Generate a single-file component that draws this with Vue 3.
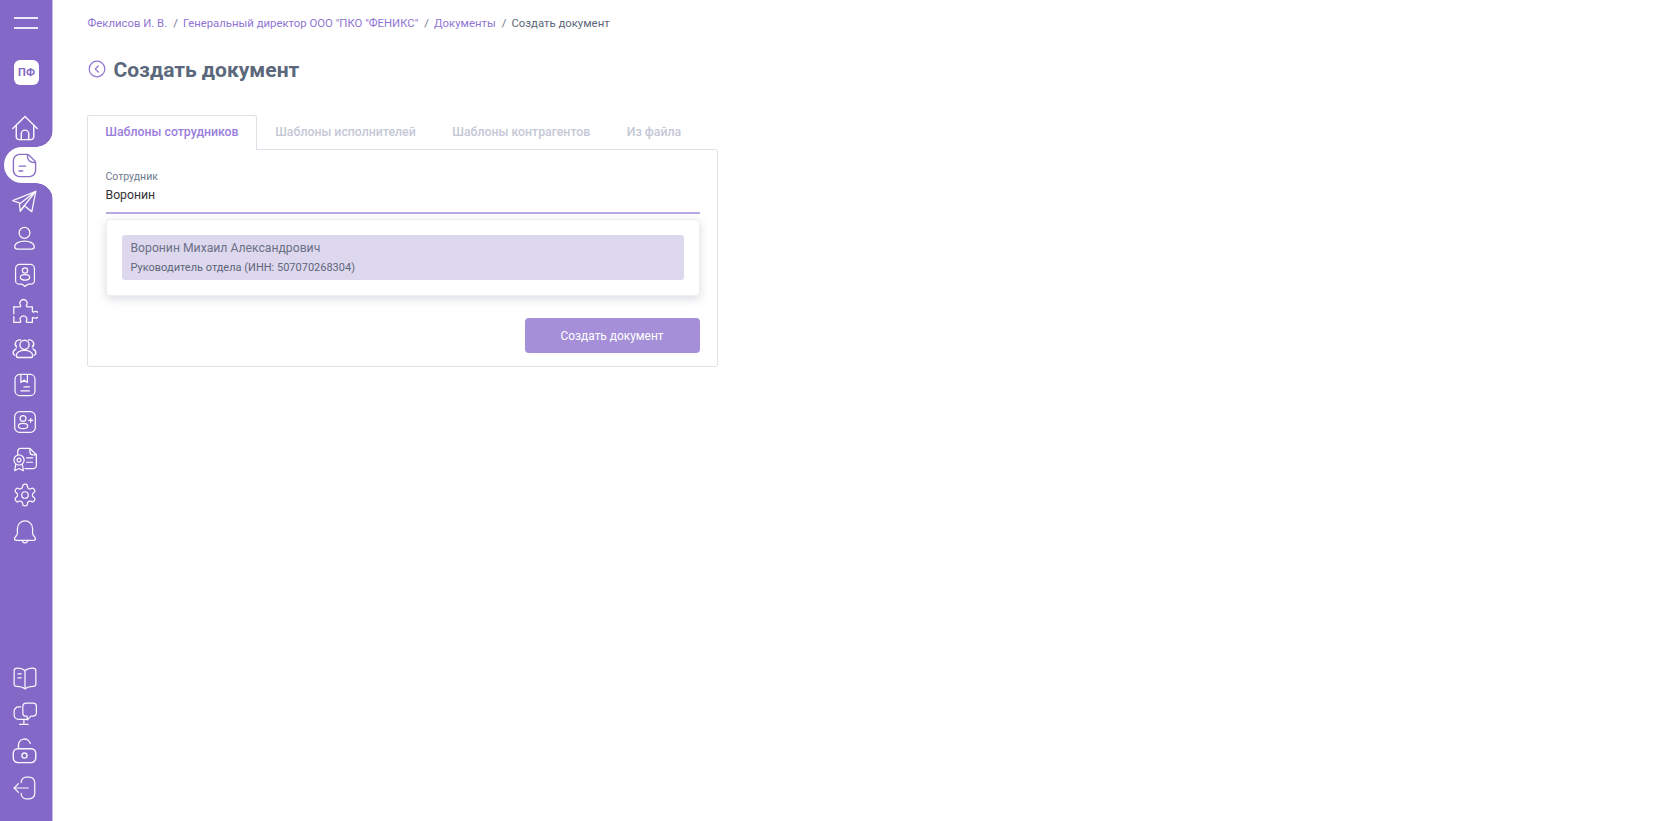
<script setup>
const c = (x, y, r) => `M${x - r} ${y}a${r} ${r} 0 1 0 ${2 * r} 0a${r} ${r} 0 1 0 ${-2 * r} 0z`
const e = (x, y, rx, ry) => `M${x - rx} ${y}a${rx} ${ry} 0 1 0 ${2 * rx} 0a${rx} ${ry} 0 1 0 ${-2 * rx} 0z`

const topIcons = [
  { name: 'home', s: 30, d: ['M2.2 12.4 12 2.8l9.8 9.6', 'M5 10.2V19a2.3 2.3 0 0 0 2.3 2.3h9.4A2.3 2.3 0 0 0 19 19v-8.8', 'M9 21.3v-4.6a3 3 0 0 1 6 0v4.6'] },
  { name: 'doc', s: 29, active: true, d: ['M14 2.8H8A5.2 5.2 0 0 0 2.8 8v8A5.2 5.2 0 0 0 8 21.2h8a5.2 5.2 0 0 0 5.2-5.2V9.8c0-.6-.2-1.1-.6-1.5l-5-5c-.4-.3-.9-.5-1.4-.5z', 'M14.5 3v1.5a5 5 0 0 0 5 5H21', 'M7.5 12.5H13', 'M7.5 16.5h3'] },
  { name: 'plane', s: 27, d: ['M1.5 11.2 22 3l-3.5 18-6.7-5.2-3.6 4.7-.8-7.3z', 'M7.9 14 22 3 11.8 15.8', 'M8.2 20.5l3.6-4.7'] },
  { name: 'user', s: 27, d: [c(12, 7, 4.8), 'M12 14.3c-4.8 0-8.7 2-8.7 4.8 0 1.5 1 2.3 2.5 2.3h12.4c1.5 0 2.5-.8 2.5-2.3 0-2.8-3.9-4.8-8.7-4.8z'] },
  { name: 'badge', d: ['M7 2.3h10a3.7 3.7 0 0 1 3.7 3.7v11.2a3.3 3.3 0 0 1-3.3 3.3h-2.7L12 22.5l-2.7-2H6.6a3.3 3.3 0 0 1-3.3-3.3V6A3.7 3.7 0 0 1 7 2.3z', c(12, 7.8, 2.4), e(12, 14.2, 4.3, 2.6)] },
  { name: 'puzzle', s: 27, d: ['M2.5 7.8h5.2c.8 0 1.1-.8.7-1.4a3.2 3.2 0 1 1 5.4 0c-.4.6-.1 1.4.7 1.4h4.5v3.8c0 .8.8 1.1 1.4.7a3 3 0 1 1 0 5.2c-.6-.4-1.4-.1-1.4.7v3.5h-4.6c-.8 0-1-.8-.7-1.4a3 3 0 1 0-5.2 0c.3.6 0 1.4-.7 1.4H2.5v-5.2', 'M2.5 14V7.8'] },
  { name: 'users', s: 29, d: [c(12, 9, 3.8), 'M12 13.5c-3.8 0-6.8 1.8-6.8 4.2 0 1.1.7 1.8 1.8 1.8h10c1.1 0 1.8-.7 1.8-1.8 0-2.4-3-4.2-6.8-4.2z', 'M8.7 5a3.4 3.4 0 0 0-3.2 5.8', 'M15.3 5a3.4 3.4 0 0 1 3.2 5.8', 'M5 12.3c-1.3.7-2.4 2-2.4 3.4 0 .9.5 1.5 1.2 1.7', 'M19 12.3c1.3.7 2.4 2 2.4 3.4 0 .9-.5 1.5-1.2 1.7'] },
  { name: 'ledger', d: ['M7 2.3h10a4.2 4.2 0 0 1 4.2 4.2v11a4.2 4.2 0 0 1-4.2 4.2H7a4.2 4.2 0 0 1-4.2-4.2v-11A4.2 4.2 0 0 1 7 2.3z', 'M8.2 2.5v7.2l3-2.2 3 2.2V2.5', 'M11 13.8h5', 'M8.2 17.5H16'] },
  { name: 'gplus', d: ['M7 2.5h10A4.5 4.5 0 0 1 21.5 7v10a4.5 4.5 0 0 1-4.5 4.5H7A4.5 4.5 0 0 1 2.5 17V7A4.5 4.5 0 0 1 7 2.5z', c(10.2, 8.8, 2.7), e(10.2, 15.7, 4.3, 2.5), 'M15.5 10.5H19', 'M17.25 8.8v3.5'] },
  { name: 'cert', d: ['M5.3 8.3V5A2.8 2.8 0 0 1 8 2.3h8.5l6 5.8V18a2.8 2.8 0 0 1-2.8 2.8H12', 'M16.5 2.5v2.8a2.8 2.8 0 0 0 2.8 2.8h3', 'M13.5 11H19', 'M13.5 15H19', c(6.5, 13, 4.7), c(6.5, 13, 1.8), 'M3.5 16.8l-1 6 4-2 4 2-1-6'] },
  { name: 'gear', d: [c(12, 12, 3), 'M12.22 2h-.44a2 2 0 0 0-2 2v.18a2 2 0 0 1-1 1.73l-.43.25a2 2 0 0 1-2 0l-.15-.08a2 2 0 0 0-2.73.73l-.22.38a2 2 0 0 0 .73 2.73l.15.1a2 2 0 0 1 1 1.72v.51a2 2 0 0 1-1 1.74l-.15.09a2 2 0 0 0-.73 2.73l.22.38a2 2 0 0 0 2.73.73l.15-.08a2 2 0 0 1 2 0l.43.25a2 2 0 0 1 1 1.73V20a2 2 0 0 0 2 2h.44a2 2 0 0 0 2-2v-.18a2 2 0 0 1 1-1.73l.43-.25a2 2 0 0 1 2 0l.15.08a2 2 0 0 0 2.73-.73l.22-.39a2 2 0 0 0-.73-2.73l-.15-.08a2 2 0 0 1-1-1.74v-.5a2 2 0 0 1 1-1.74l.15-.09a2 2 0 0 0 .73-2.73l-.22-.38a2 2 0 0 0-2.73-.73l-.15.08a2 2 0 0 1-2 0l-.43-.25a2 2 0 0 1-1-1.73V4a2 2 0 0 0-2-2z'] },
  { name: 'bell', d: ['M12 1.8a7 7 0 0 0-7 7v4.5c0 2-2.7 3.2-2.7 5 0 1 .9 1.5 2 1.5h15.4c1.1 0 2-.5 2-1.5 0-1.8-2.7-3-2.700-5V8.800a7 7 0 0 0-7-7z', 'M9.3 20a2.8 2.8 0 0 0 5.4 0'] },
]
const bottomIcons = [
  { name: 'book', d: ['M12 5.2C10.2 3.5 7.5 2.8 4.8 2.8 3.3 2.8 2 3.8 2 5.3v12.5c0 1.2 1 2 2.2 2 2.8 0 5.8.6 7.800 2.200 2-1.600 5-2.200 7.800-2.200 1.200 0 2.200-.8 2.200-2V5.300c0-1.500-1.300-2.500-2.800-2.500-2.700 0-5.400.7-7.200 2.400z', 'M12 5.2V22', 'M5.5 8.3h3', 'M5.5 11.8h3'] },
  { name: 'monitor', d: ['M8 5.5H6a4 4 0 0 0-4 4v3.5a4 4 0 0 0 4 4h8', 'M11 17v4.5', 'M7 21.5h8', 'M13 2h6.5a3 3 0 0 1 3 3v6a3 3 0 0 1-3 3h-2L14 17.5V14h-1a3 3 0 0 1-3-3V5a3 3 0 0 1 3-3z'] },
  { name: 'lock', s: 29, d: ['M7 10V7.5a5 5 0 0 1 9.8-1.4', 'M6.5 10.5h11a3.8 3.8 0 0 1 3.800 3.800v3.900a3.800 3.800 0 0 1-3.800 3.800h-11a3.800 3.800 0 0 1-3.800-3.800v-3.900a3.800 3.800 0 0 1 3.800-3.800z', c(12, 16.2, 2.1)] },
  { name: 'exit', d: ['M8.5 7v-.5A4.5 4.5 0 0 1 13 2h3a5 5 0 0 1 5 5v10a5 5 0 0 1-5 5h-3a4.5 4.5 0 0 1-4.500-4.500V17', 'M15 12H2', 'M6 8l-4 4 4 4'] },
]
const crumbs = ['Феклисов И. В.', 'Генеральный директор ООО "ПКО "ФЕНИКС"', 'Документы']
const tabs = ['Шаблоны сотрудников', 'Шаблоны исполнителей', 'Шаблоны контрагентов', 'Из файла']
</script>

<template>
  <div class="page">
    <aside class="sidebar">
      <div class="burger"><span></span><span></span></div>
      <div class="logo">ПФ</div>
      <nav class="nav">
        <a v-for="i in topIcons" :key="i.name" class="nav-item" :class="{ active: i.active }">
          <svg viewBox="0 0 24 24" class="ico" :style="{ width: (i.s || 26) + 'px', height: (i.s || 26) + 'px' }"><path v-for="p in i.d" :key="p" :d="p" /></svg>
        </a>
      </nav>
      <nav class="nav bottom">
        <a v-for="i in bottomIcons" :key="i.name" class="nav-item">
          <svg viewBox="0 0 24 24" class="ico" :style="{ width: (i.s || 26) + 'px', height: (i.s || 26) + 'px' }"><path v-for="p in i.d" :key="p" :d="p" /></svg>
        </a>
      </nav>
    </aside>
    <main class="main">
      <div class="crumbs">
        <template v-for="c2 in crumbs" :key="c2">
          <a class="crumb">{{ c2 }}</a><span class="sep">/</span>
        </template>
        <span class="current">Создать документ</span>
      </div>
      <div class="head">
        <svg viewBox="0 0 18 18" class="back">
          <circle cx="9" cy="9" r="7.8" />
          <path d="M10.3 6 7.3 9l3 3" />
        </svg>
        <h1>Создать документ</h1>
      </div>
      <div class="panel">
        <div class="tabs">
          <div v-for="(t, n) in tabs" :key="t" class="tab" :class="{ on: n === 0 }">{{ t }}</div>
        </div>
        <div class="card">
          <div class="field">
            <div class="label">Сотрудник</div>
            <div class="value">Воронин</div>
          </div>
          <div class="menu">
            <div class="option">
              <div class="opt-name">Воронин Михаил Александрович</div>
              <div class="opt-sub">Руководитель отдела (ИНН: 507070268304)</div>
            </div>
          </div>
          <div class="actions"><button class="btn">Создать документ</button></div>
        </div>
      </div>
    </main>
  </div>
</template>

<style>
html, body { margin: 0; background: #fff; }
</style>

<style scoped>
.page { display: flex; height: 821px; overflow: hidden; font-family: Roboto, sans-serif; background: #fff; }
.sidebar {
  width: 52px; flex: none; background: #8468c7; border-right: 1px solid #c9bbe6;
  display: flex; flex-direction: column; align-items: stretch; padding-top: 17px;
}
.burger { height: 12px; display: flex; flex-direction: column; justify-content: space-between; width: 24px; margin-left: 14px; }
.burger span { display: block; height: 2px; background: #fff; opacity: .85; }
.logo {
  width: 25px; height: 25px; margin: 31px 0 0 14px; border-radius: 6px; background: #fff; color: #8468c7;
  font-size: 11px; font-weight: 700; display: flex; align-items: center; justify-content: center;
}
.nav { display: flex; flex-direction: column; margin-top: 25px; }
.nav.bottom { margin-top: auto; padding-bottom: 15px; }
.nav-item { height: 36.7px; display: flex; align-items: center; justify-content: center; position: relative; padding-right: 3px; }
.ico { flex: none; fill: none; stroke: #fff; stroke-width: 1.15; stroke-linecap: round; stroke-linejoin: round; opacity: .95; }
.nav-item.active { background: #fff; margin-left: 3.5px; border-radius: 18px 0 0 18px; margin-right: -1px; padding-right: 7px; z-index: 1; }
.nav-item.active .ico { stroke: #8468c7; }
.nav-item.active::before, .nav-item.active::after {
  content: ""; position: absolute; right: 0; width: 17px; height: 17px;
}
.nav-item.active::before { top: -17px; background: radial-gradient(circle at 0 0, transparent 16.5px, #fff 17px); }
.nav-item.active::after { bottom: -17px; background: radial-gradient(circle at 0 100%, transparent 16.5px, #fff 17px); }

.main { flex: 1; padding: 16px 0 0 34.5px; min-width: 0; }
.crumbs { display: flex; align-items: center; font-size: 11.35px; line-height: 14px; height: 14px; }
.crumb { color: #8f75d3; }
.sep { color: #6b7688; margin: 0 5px 0 6px; }
.current { color: #5c6778; }
.head { display: flex; align-items: center; gap: 8px; margin-top: 24px; height: 32px; }
.back { width: 18px; height: 18px; margin-top: -2px; fill: none; stroke: #8f75d3; stroke-width: 1.2; stroke-linecap: round; stroke-linejoin: round; }
h1 { margin: 0; font-size: 21px; line-height: 32px; font-weight: 700; color: #5b687b; }
.panel { width: 631px; margin: 29px 0 0 -.5px; }
.tabs { display: flex; position: relative; z-index: 1; margin-bottom: -1px; }
.tab {
  padding: 0 17.3px; height: 34px; line-height: 33px; font-size: 12.3px; font-weight: 500; color: #c5c8d6;
  border: 1px solid transparent; border-bottom: 0; border-radius: 3px 3px 0 0; box-sizing: border-box;
}
.tab.on { color: #9b7edc; background: #fff; border-color: #dfe1e8; height: 35px; }
.card { border: 1px solid #dfe1e8; border-radius: 0 3px 3px 3px; padding: 20px 17.5px 13px 17.5px; background: #fff; }
.field { border-bottom: 2px solid #b9a8e4; height: 42px; }
.label { font-size: 10.5px; line-height: 13px; color: #6e7a90; }
.value { font-size: 12.25px; line-height: 16px; color: #333; margin-top: 4px; }
.menu {
  margin-top: 5px; padding: 15px; height: 45px; border: 1px solid #eceef2; border-radius: 4px;
  box-shadow: 0 3px 10px rgba(90, 100, 120, .22); background: #fff;
}
.option { height: 45px; background: #ded8ef; border-radius: 3px; padding: 5px 9px; box-sizing: border-box; }
.opt-name { font-size: 12.2px; line-height: 17px; color: #6a7086; }
.opt-sub { font-size: 11px; line-height: 15px; margin-top: 3px; color: #5f6579; }
.actions { display: flex; justify-content: flex-end; margin-top: 22px; }
.btn {
  width: 175px; height: 35px; border: 0; border-radius: 4px; background: #a58fd8; color: #fff;
  font: 400 11.9px Roboto, sans-serif;
}
</style>
